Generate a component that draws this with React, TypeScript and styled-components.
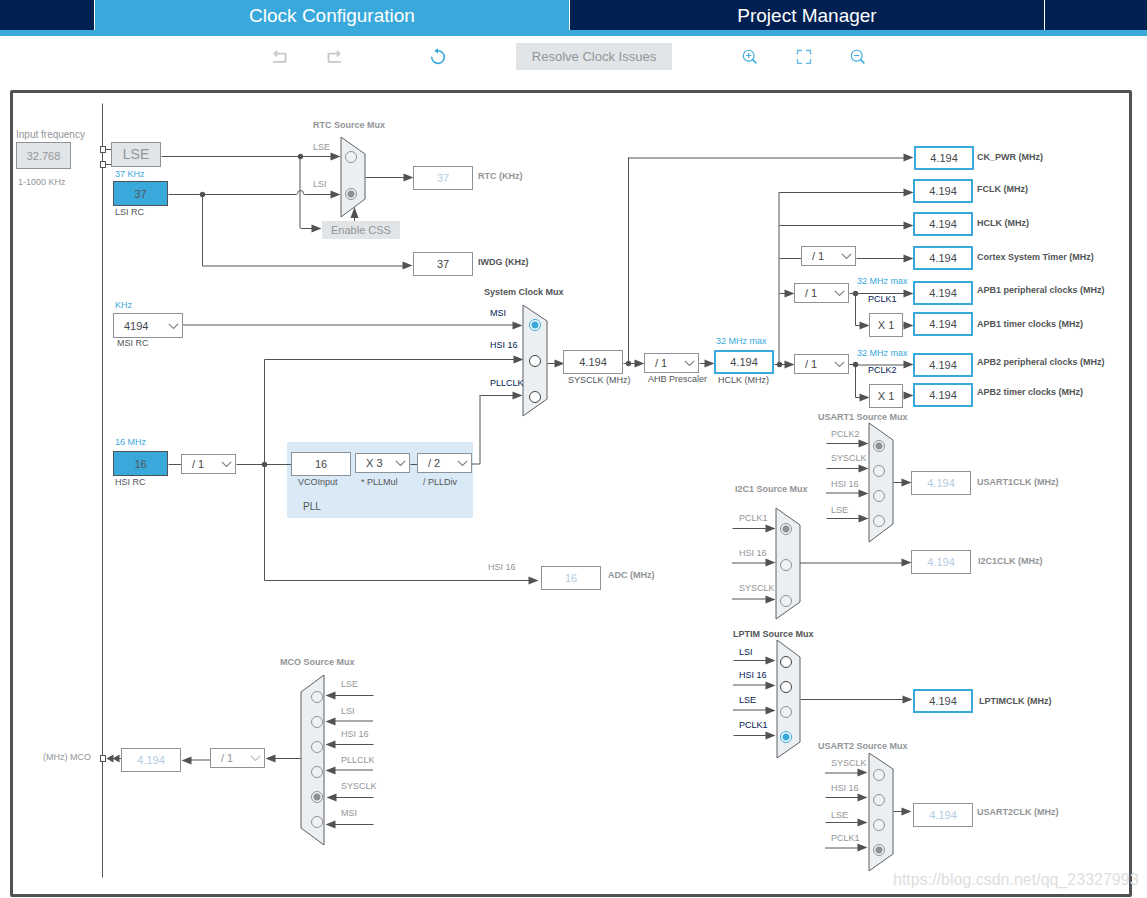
import React from "react";
import styled, { createGlobalStyle, css } from "styled-components";

const color = {
  navy: "#002052",
  blue: "#39a9dc",
  wire: "#505352",
  text: "#525557",
  muted: "#929598",
  mutedValue: "#b4cbe2",
  border: "#8c9297",
  fill: "#e1e5e8",
  mux: "#ebeff2",
  pll: "#dae9f6",
};

/* The diagram keeps its own coordinate space; this is its top left corner. */
const ORIGIN = { x: 13, y: 93 };
const SIZE = { width: 1116, height: 801 };

const GlobalStyle = createGlobalStyle`
  *, *::before, *::after { box-sizing: border-box; }
  body {
    margin: 0;
    background: #fff;
    color: ${color.text};
    font-family: "Liberation Sans", Arial, sans-serif;
  }
`;

const Tabs = styled.nav`
  display: grid;
  grid-template-columns: 95fr 475fr 475fr 102fr;
  height: 36px;
  border-bottom: 6px solid ${color.blue};
  background: ${color.navy};
`;

const TabStub = styled.span<{ $last?: boolean }>`
  border-right: ${(p) => (p.$last ? "none" : "1px solid #fff")};
`;

const Tab = styled.button<{ $active?: boolean }>`
  padding: 2px 0 0;
  border: 0;
  border-right: 1px solid #fff;
  background: ${(p) => (p.$active ? color.blue : color.navy)};
  color: #fff;
  font: 19px/28px "Liberation Sans", Arial, sans-serif;
`;

const Toolbar = styled.div`
  display: flex;
  justify-content: center;
  align-items: center;
  gap: 66px;
  height: 54px;
  padding: 0 9px 13px 0;
`;

const ToolGroup = styled.div<{ $gap: number }>`
  display: flex;
  align-items: center;
  gap: ${(p) => p.$gap}px;
`;

const IconButton = styled.button`
  display: grid;
  place-items: center;
  width: 24px;
  height: 24px;
  padding: 0;
  border: 0;
  background: none;
  color: ${color.blue};
  &:disabled { color: #c8c8c8; }
`;

const ResolveButton = styled.button`
  width: 156px;
  height: 27px;
  padding: 0;
  border: 0;
  background: ${color.fill};
  color: ${color.muted};
  font: 13px/27px "Liberation Sans", Arial, sans-serif;
`;

const Board = styled.main`
  margin: 0 15px 0 10px;
  border: 3px solid ${color.wire};
  border-radius: 2px;
`;

const Canvas = styled.div`
  position: relative;
  width: 100%;
  min-width: ${SIZE.width}px;
  height: ${SIZE.height}px;
`;

const Wiring = styled.svg`
  position: absolute;
  left: 0;
  top: 0;
  display: block;
`;

interface At {
  $x: number;
  $y: number;
}

const placed = css<At>`
  position: absolute;
  left: ${(p) => p.$x - ORIGIN.x}px;
  top: ${(p) => p.$y - ORIGIN.y}px;
`;

type Tone = "text" | "muted" | "blue" | "navy";

const Caption = styled.label<At & { $tone?: Tone; $bold?: boolean }>`
  ${placed}
  margin-top: -6px;
  color: ${(p) => color[p.$tone ?? "text"]};
  font-size: 9px;
  font-weight: ${(p) => (p.$bold ? 700 : 400)};
  line-height: 12px;
  white-space: nowrap;
`;

const WideCaption = styled(Caption)`
  font-size: 10px;
`;

type Look = "plain" | "active" | "source" | "disabled" | "off";

const looks: Record<Look, ReturnType<typeof css>> = {
  plain: css`border: 1px solid ${color.border}; background: #fff; color: #45484b;`,
  active: css`border: 2px solid ${color.blue}; background: #fff; color: #45484b;`,
  source: css`border: 1px solid ${color.wire}; background: ${color.blue}; color: ${color.text};`,
  disabled: css`border: 1px solid ${color.border}; background: #fff; color: ${color.mutedValue};`,
  off: css`border: 1px solid ${color.border}; background: ${color.fill}; color: ${color.muted};`,
};

const ValueBox = styled.input<At & { $w: number; $h: number; $look: Look }>`
  ${placed}
  width: ${(p) => p.$w}px;
  height: ${(p) => p.$h}px;
  padding: 0;
  border-radius: 0;
  text-align: center;
  font: 11px/14px "Liberation Sans", Arial, sans-serif;
  ${(p) => looks[p.$look]}
`;

const SourceButton = styled.button<At>`
  ${placed}
  width: 50px;
  height: 25px;
  padding: 0;
  border: 1px solid ${color.border};
  background: ${color.fill};
  color: ${color.muted};
  font: 14px/23px "Liberation Sans", Arial, sans-serif;
`;

const CssButton = styled.button<At>`
  ${placed}
  width: 78px;
  height: 18px;
  padding: 0;
  border: 0;
  background: ${color.fill};
  color: ${color.muted};
  font: 11px/18px "Liberation Sans", Arial, sans-serif;
`;

const PickerBox = styled.span<At & { $w: number; $h: number; $off?: boolean }>`
  ${placed}
  display: block;
  width: ${(p) => p.$w}px;
  height: ${(p) => p.$h}px;
  color: ${(p) => (p.$off ? "#bcc0c3" : "#7d8285")};

  select {
    width: 100%;
    height: 100%;
    padding: 0 0 0 10px;
    border: 1px solid ${color.border};
    border-radius: 0;
    appearance: none;
    background: #fff;
    color: ${(p) => (p.$off ? color.muted : "#45484b")};
    font: 11px/14px "Liberation Sans", Arial, sans-serif;
    opacity: 1;
  }

  svg {
    position: absolute;
    right: 4px;
    top: 50%;
    margin-top: -3px;
    pointer-events: none;
  }
`;

const Panel = styled.div<At & { $w: number; $h: number }>`
  ${placed}
  width: ${(p) => p.$w}px;
  height: ${(p) => p.$h}px;
  background: ${color.pll};
`;

const Radio = styled.input<At>`
  ${placed}
  width: 12px;
  height: 12px;
  margin: -6px 0 0 -6px;
  border: 1px solid #3f4244;
  border-radius: 50%;
  appearance: none;
  background: #fff;

  &:checked {
    border-color: ${color.blue};
    background: radial-gradient(circle, ${color.blue} 0 3px, #fff 4px);
  }
  &:disabled {
    border-color: #8f9498;
    background: #f0f1f3;
  }
  &:checked:disabled {
    background: radial-gradient(circle, #8b9095 0 3px, #f0f1f3 4px);
  }
`;

const Watermark = styled.span<At>`
  ${placed}
  color: #dedede;
  font-size: 16px;
  line-height: 20px;
  white-space: nowrap;
`;

interface ValueSpec {
  id: string;
  x: number;
  y: number;
  value: string;
  look: Look;
  w?: number;
  h?: number;
  label?: [string, number, number];
  bold?: boolean;
  tone?: Tone;
}

const values: ValueSpec[] = [
  { id: "lsi", x: 113, y: 181, w: 55, h: 25, value: "37", look: "source", label: ["LSI RC", 115, 212] },
  { id: "hsi", x: 113, y: 451, w: 55, h: 25, value: "16", look: "source", label: ["HSI RC", 115, 482] },
  { id: "rtc", x: 413, y: 166, value: "37", look: "disabled", label: ["RTC (KHz)", 478, 176], bold: true, tone: "muted" },
  { id: "iwdg", x: 413, y: 252, value: "37", look: "plain", label: ["IWDG (KHz)", 478, 262], bold: true },
  { id: "sysclk", x: 563, y: 350, value: "4.194", look: "plain", label: ["SYSCLK (MHz)", 568, 380] },
  { id: "hclk", x: 714, y: 350, value: "4.194", look: "active", label: ["HCLK (MHz)", 718, 380] },
  { id: "vco", x: 291, y: 452, value: "16", look: "plain", label: ["VCOInput", 298, 482] },
  { id: "adc", x: 541, y: 566, value: "16", look: "disabled", label: ["ADC (MHz)", 608, 575], bold: true, tone: "muted" },
  { id: "mco", x: 121, y: 748, value: "4.194", look: "disabled", label: ["(MHz) MCO", 43, 757], tone: "muted" },
  { id: "ckpwr", x: 914, y: 146, value: "4.194", look: "active", label: ["CK_PWR (MHz)", 977, 157], bold: true },
  { id: "fclk", x: 913, y: 179, value: "4.194", look: "active", label: ["FCLK (MHz)", 977, 189], bold: true },
  { id: "hclkout", x: 913, y: 212, value: "4.194", look: "active", label: ["HCLK (MHz)", 977, 223], bold: true },
  { id: "cortex", x: 913, y: 246, value: "4.194", look: "active", label: ["Cortex System Timer (MHz)", 977, 257], bold: true },
  { id: "apb1", x: 913, y: 281, value: "4.194", look: "active", label: ["APB1 peripheral clocks (MHz)", 977, 290], bold: true },
  { id: "apb1t", x: 913, y: 312, value: "4.194", look: "active", label: ["APB1 timer clocks (MHz)", 977, 324], bold: true },
  { id: "apb2", x: 913, y: 353, value: "4.194", look: "active", label: ["APB2 peripheral clocks (MHz)", 977, 362], bold: true },
  { id: "apb2t", x: 913, y: 383, value: "4.194", look: "active", label: ["APB2 timer clocks (MHz)", 977, 392], bold: true },
  { id: "mul1", x: 869, y: 313, w: 34, value: "X 1", look: "plain" },
  { id: "mul2", x: 869, y: 384, w: 34, value: "X 1", look: "plain" },
  { id: "usart1", x: 911, y: 471, value: "4.194", look: "disabled", label: ["USART1CLK (MHz)", 977, 482], bold: true, tone: "muted" },
  { id: "i2c1", x: 911, y: 550, value: "4.194", look: "disabled", label: ["I2C1CLK (MHz)", 978, 561], bold: true, tone: "muted" },
  { id: "lptim", x: 913, y: 689, value: "4.194", look: "active", label: ["LPTIMCLK (MHz)", 979, 701], bold: true },
  { id: "usart2", x: 913, y: 803, value: "4.194", look: "disabled", label: ["USART2CLK (MHz)", 977, 812], bold: true, tone: "muted" },
];

interface PickerSpec {
  id: string;
  x: number;
  y: number;
  options: string[];
  w?: number;
  h?: number;
  off?: boolean;
  name: string;
  label?: [string, number, number];
}

const dividers = ["/ 1", "/ 2", "/ 4", "/ 8", "/ 16"];

const pickers: PickerSpec[] = [
  { id: "msi", x: 113, y: 313, w: 70, h: 25, options: ["4194", "2097", "1048", "524"], name: "MSI RC", label: ["MSI RC", 117, 343] },
  { id: "hsidiv", x: 181, y: 454, options: dividers, name: "HSI divider" },
  { id: "pllmul", x: 355, y: 453, options: ["X 3", "X 4", "X 6"], name: "PLLMul", label: ["* PLLMul", 361, 482] },
  { id: "plldiv", x: 417, y: 453, options: ["/ 2", "/ 3", "/ 4"], name: "PLLDiv", label: ["/ PLLDiv", 423, 482] },
  { id: "ahb", x: 644, y: 353, options: dividers, name: "AHB Prescaler", label: ["AHB Prescaler", 648, 379] },
  { id: "cortexdiv", x: 801, y: 246, options: dividers, name: "Cortex prescaler" },
  { id: "apb1div", x: 794, y: 283, options: dividers, name: "APB1 prescaler" },
  { id: "apb2div", x: 794, y: 354, options: dividers, name: "APB2 prescaler" },
  { id: "mcodiv", x: 210, y: 748, options: dividers, name: "MCO divider", off: true },
];

interface MuxSpec {
  id: string;
  title: [string, number, number];
  off?: boolean;
  shape: string;
  radioX: number;
  labelX: number;
  /* label, label y, radio y */
  sources: [string, number, number][];
  checked: number;
  offSources?: number[];
}

const muxes: MuxSpec[] = [
  {
    id: "rtcmux", title: ["RTC Source Mux", 313, 125], off: true,
    shape: "341,137 365,154 365,199 341,217", radioX: 351, labelX: 313, checked: 1,
    sources: [["LSE", 147, 157], ["LSI", 184, 194]],
  },
  {
    id: "sysmux", title: ["System Clock Mux", 484, 292],
    shape: "523,305 547,321 547,399 523,416", radioX: 535, labelX: 490, checked: 0,
    sources: [["MSI", 313, 325], ["HSI 16", 345, 361], ["PLLCLK", 383, 397]],
  },
  {
    id: "usart1mux", title: ["USART1 Source Mux", 818, 417], off: true,
    shape: "869,423 893,440 893,524 869,542", radioX: 879, labelX: 831, checked: 0,
    sources: [["PCLK2", 434, 446], ["SYSCLK", 458, 471], ["HSI 16", 484, 496], ["LSE", 510, 521]],
  },
  {
    id: "i2c1mux", title: ["I2C1 Source Mux", 735, 489], off: true,
    shape: "776,508 800,525 800,602 776,619", radioX: 786, labelX: 739, checked: 0,
    sources: [["PCLK1", 518, 529], ["HSI 16", 553, 565], ["SYSCLK", 588, 601]],
  },
  {
    id: "lptimmux", title: ["LPTIM Source Mux", 733, 634],
    shape: "777,640 800,657 800,742 777,758", radioX: 786, labelX: 739, checked: 3, offSources: [2],
    sources: [["LSI", 652, 662], ["HSI 16", 675, 687], ["LSE", 700, 712], ["PCLK1", 725, 737]],
  },
  {
    id: "usart2mux", title: ["USART2 Source Mux", 818, 746], off: true,
    shape: "869,753 893,769 893,854 869,871", radioX: 879, labelX: 831, checked: 3,
    sources: [["SYSCLK", 763, 775], ["HSI 16", 788, 800], ["LSE", 815, 825], ["PCLK1", 838, 850]],
  },
  {
    id: "mcomux", title: ["MCO Source Mux", 280, 662], off: true,
    shape: "324,675 301,692 301,828 324,845", radioX: 317, labelX: 341, checked: 4,
    sources: [["LSE", 684, 697], ["LSI", 711, 722], ["HSI 16", 734, 747], ["PLLCLK", 760, 772], ["SYSCLK", 786, 797], ["MSI", 813, 822]],
  },
];

/* Thin, single-pixel wires. */
const sharpWires = [
  "M102 103V877", "M105 149H111", "M105 164H111", "M161 156H331",
  "M168 194H296", "M304 194H331", "M202 194V265", "M365 177H404",
  "M354 216V221", "M264 359H514", "M264 359V580", "M168 464H181",
  "M236 464H291", "M410 464H417", "M480 395H513", "M264 580H529",
  "M547 363H555", "M623 363H635", "M628 157V363", "M699 363H705", "M774 364H785",
  "M779 192H904", "M779 225H904", "M779 258H801", "M856 258H904",
  "M779 293H785", "M849 293H904", "M855 293V325H860", "M903 325H904",
  "M849 364H856", "M855 364V397H860",
  "M826 443H859", "M826 468H859", "M826 518H859", "M893 482H902",
  "M732 528H766", "M733 660H766", "M733 735H766", "M800 699H903",
  "M825 797H858", "M825 822H858", "M893 811H902",
  "M373 695H334", "M373 744H334", "M373 797H334", "M373 824H334",
  "M301 758H274", "M300 228H312", "M116 758H121",
].join("");

/* Wires that fall between two pixel rows or columns. */
const softWires = [
  "M202 266H403", "M183 325H513", "M300 156V228", "M628 158H904", "M779 192V364",
  "M472 464H480V395", "M856 365H904", "M826 493H859",
  "M732 563H766", "M732 599H766", "M800 563H902",
  "M733 685H766", "M733 710H766", "M825 773H858", "M825 848H858",
  "M373 721H334", "M373 770H334", "M210 760H190",
].join("");

const rightArrows: [number, number][] = [
  [340, 156], [340, 194], [321, 228], [413, 177], [412, 265],
  [522, 325], [523, 359], [522, 395], [564, 363], [644, 363], [714, 363], [794, 364],
  [913, 157], [913, 192], [913, 225], [913, 258], [794, 293], [913, 293], [869, 325], [913, 325],
  [913, 364], [869, 397], [913, 395],
  [868, 443], [868, 468], [868, 493], [868, 518], [911, 482],
  [775, 528], [775, 562], [775, 599], [911, 562],
  [775, 660], [775, 685], [775, 710], [775, 735], [912, 699],
  [867, 772], [867, 797], [867, 822], [867, 847], [911, 811],
  [538, 580],
];

const leftArrows: [number, number][] = [
  [325, 695], [325, 721], [325, 744], [325, 770], [326, 797], [325, 824],
  [265, 758], [181, 760], [106, 758], [112, 758],
];

const dots: [number, number][] = [
  [202, 194], [300, 156], [264, 464], [628, 363], [779, 364], [855, 293], [855, 364],
];

const ports: [number, number][] = [[100, 146], [100, 161], [100, 755]];

function Wires() {
  return (
    <Wiring
      width={SIZE.width}
      height={SIZE.height}
      viewBox={`${ORIGIN.x} ${ORIGIN.y} ${SIZE.width} ${SIZE.height}`}
      aria-hidden="true"
    >
      <path d={softWires} fill="none" stroke={color.wire} />
      <g transform="translate(0.5 0.5)">
        <path d={sharpWires} fill="none" stroke={color.wire} />
        <path d="M296 194q1 0 1 -1a3 3 0 0 1 6 0q0 1 1 1" fill="none" stroke={color.wire} />
        {ports.map(([x, y]) => (
          <rect key={`${x}-${y}`} x={x} y={y} width={5} height={6} fill="#fff" stroke={color.wire} />
        ))}
        {dots.map(([x, y]) => (
          <circle key={`${x}-${y}`} cx={x} cy={y} r={2.7} fill={color.wire} />
        ))}
        {rightArrows.map(([x, y]) => (
          <path key={`${x}-${y}`} d={`M${x} ${y}l-10 -4v8z`} fill={color.wire} />
        ))}
        {leftArrows.map(([x, y]) => (
          <path key={`${x}-${y}`} d={`M${x} ${y}l${x < 120 ? 7 : 10} -4v8z`} fill={color.wire} />
        ))}
      </g>
      {muxes.map((m) => (
        <polygon key={m.id} points={m.shape} fill={color.mux} stroke="#5d6164" />
      ))}
      <path d="M354.5 207l-4 11h8z" fill={color.wire} />
    </Wiring>
  );
}

function Value({ spec }: { spec: ValueSpec }) {
  const { id, x, y, value, look, label } = spec;
  return (
    <>
      <ValueBox
        id={id}
        $x={x}
        $y={y}
        $w={spec.w ?? 60}
        $h={spec.h ?? 24}
        $look={look}
        defaultValue={value}
        readOnly={id !== "hclk"}
        disabled={look === "disabled"}
        aria-label={label ? undefined : "Timer multiplier"}
      />
      {label && (
        <Caption htmlFor={id} $x={label[1]} $y={label[2]} $bold={spec.bold} $tone={spec.tone}>
          {label[0]}
        </Caption>
      )}
    </>
  );
}

function Picker({ spec }: { spec: PickerSpec }) {
  const { id, label } = spec;
  return (
    <>
      <PickerBox $x={spec.x} $y={spec.y} $w={spec.w ?? 55} $h={spec.h ?? 20} $off={spec.off}>
        <select id={id} disabled={spec.off} aria-label={label ? undefined : spec.name}>
          {spec.options.map((o) => (
            <option key={o}>{o}</option>
          ))}
        </select>
        <svg width="11" height="7" viewBox="0 0 11 7" fill="none" stroke="currentColor" strokeWidth="1.2">
          <path d="M.8 .8L5.5 5.5L10.2 .8" />
        </svg>
      </PickerBox>
      {label && (
        <Caption htmlFor={id} $x={label[1]} $y={label[2]}>
          {label[0]}
        </Caption>
      )}
    </>
  );
}

function Mux({ spec }: { spec: MuxSpec }) {
  const [title, tx, ty] = spec.title;
  return (
    <div role="radiogroup" aria-labelledby={`${spec.id}-title`}>
      <Caption as="span" id={`${spec.id}-title`} $x={tx} $y={ty} $bold $tone={spec.off ? "muted" : "text"}>
        {title}
      </Caption>
      {spec.sources.map(([label, labelY, radioY], i) => (
        <React.Fragment key={label}>
          <Caption htmlFor={`${spec.id}-${i}`} $x={spec.labelX} $y={labelY} $tone={spec.off ? "muted" : "navy"}>
            {label}
          </Caption>
          <Radio
            type="radio"
            id={`${spec.id}-${i}`}
            name={spec.id}
            $x={spec.radioX}
            $y={radioY}
            defaultChecked={spec.checked === i}
            disabled={spec.off || spec.offSources?.includes(i)}
          />
        </React.Fragment>
      ))}
    </div>
  );
}

function UndoIcon({ flip }: { flip?: boolean }) {
  return (
    <svg width="16" height="16" viewBox="0 0 16 16" fill="none" stroke="currentColor" strokeWidth="1.8">
      <g transform={flip ? "translate(16 0) scale(-1 1)" : undefined}>
        <path d="M1 12.8H13.5V4.6H3" strokeLinejoin="round" />
        <path d="M5.2 1.8L2.4 4.6L5.2 7.4" />
      </g>
    </svg>
  );
}

function ResetIcon() {
  return (
    <svg width="18" height="18" viewBox="0 0 18 18" fill="none" stroke="currentColor" strokeWidth="1.6">
      <path d="M2.7 8.6A6.3 6.3 0 1 0 9 2.8H8" />
      <path d="M5.2 2.8L9 .2V5.400z" fill="currentColor" stroke="none" />
    </svg>
  );
}

function LensIcon({ plus }: { plus?: boolean }) {
  return (
    <svg width="16" height="16" viewBox="0 0 16 16" fill="none" stroke="currentColor" strokeWidth="1.1">
      <circle cx="6.7" cy="6.7" r="5.4" />
      <path d="M10.6 10.6L14.4 14.4" strokeWidth="1.5" />
      <path d={plus ? "M4.2 6.5H9.2M6.7 4V9" : "M4.2 6.5H9.2"} />
    </svg>
  );
}

function FitIcon() {
  return (
    <svg width="16" height="16" viewBox="0 0 16 16" fill="none" stroke="currentColor" strokeOpacity="0.8" strokeWidth="1.3">
      <path d="M1.5 5.6V1.5H6M10 1.5H14.5V5.6M14.5 10V14.3H10M6 14.3H1.5V10" />
    </svg>
  );
}

export default function App() {
  return (
    <>
      <GlobalStyle />
      <Tabs>
        <TabStub />
        <Tab type="button" $active>Clock Configuration</Tab>
        <Tab type="button">Project Manager</Tab>
        <TabStub $last />
      </Tabs>
      <Toolbar>
        <ToolGroup $gap={80}>
          <ToolGroup $gap={30}>
            <IconButton type="button" disabled aria-label="Undo"><UndoIcon /></IconButton>
            <IconButton type="button" disabled aria-label="Redo"><UndoIcon flip /></IconButton>
          </ToolGroup>
          <IconButton type="button" aria-label="Reset"><ResetIcon /></IconButton>
        </ToolGroup>
        <ResolveButton type="button" disabled>Resolve Clock Issues</ResolveButton>
        <ToolGroup $gap={30}>
          <IconButton type="button" aria-label="Zoom in"><LensIcon plus /></IconButton>
          <IconButton type="button" aria-label="Fit to screen"><FitIcon /></IconButton>
          <IconButton type="button" aria-label="Zoom out"><LensIcon /></IconButton>
        </ToolGroup>
      </Toolbar>
      <Board>
        <Canvas>
          <Panel $x={287} $y={442} $w={186} $h={76} />
          <Wires />
          <WideCaption htmlFor="input-frequency" $x={16} $y={135} $tone="muted">Input frequency</WideCaption>
          <ValueBox id="input-frequency" $x={16} $y={142} $w={55} $h={27} $look="off" defaultValue="32.768" disabled />
          <Caption as="span" $x={18} $y={182} $tone="muted">1-1000 KHz</Caption>
          <SourceButton type="button" disabled $x={111} $y={142}>LSE</SourceButton>
          <CssButton type="button" disabled $x={322} $y={221}>Enable CSS</CssButton>
          <Caption as="span" $x={115} $y={174} $tone="blue">37 KHz</Caption>
          <Caption as="span" $x={115} $y={305} $tone="blue">KHz</Caption>
          <Caption as="span" $x={115} $y={442} $tone="blue">16 MHz</Caption>
          <Caption as="span" $x={716} $y={341} $tone="blue">32 MHz max</Caption>
          <Caption as="span" $x={857} $y={281} $tone="blue">32 MHz max</Caption>
          <Caption as="span" $x={857} $y={353} $tone="blue">32 MHz max</Caption>
          <Caption as="span" $x={868} $y={299} $tone="navy">PCLK1</Caption>
          <Caption as="span" $x={868} $y={370} $tone="navy">PCLK2</Caption>
          <Caption as="span" $x={488} $y={567} $tone="muted">HSI 16</Caption>
          <WideCaption as="span" $x={303} $y={507}>PLL</WideCaption>
          {values.map((v) => <Value key={v.id} spec={v} />)}
          {pickers.map((p) => <Picker key={p.id} spec={p} />)}
          {muxes.map((m) => <Mux key={m.id} spec={m} />)}
          <Watermark $x={893} $y={870}>https://blog.csdn.net/qq_23327993</Watermark>
        </Canvas>
      </Board>
    </>
  );
}
